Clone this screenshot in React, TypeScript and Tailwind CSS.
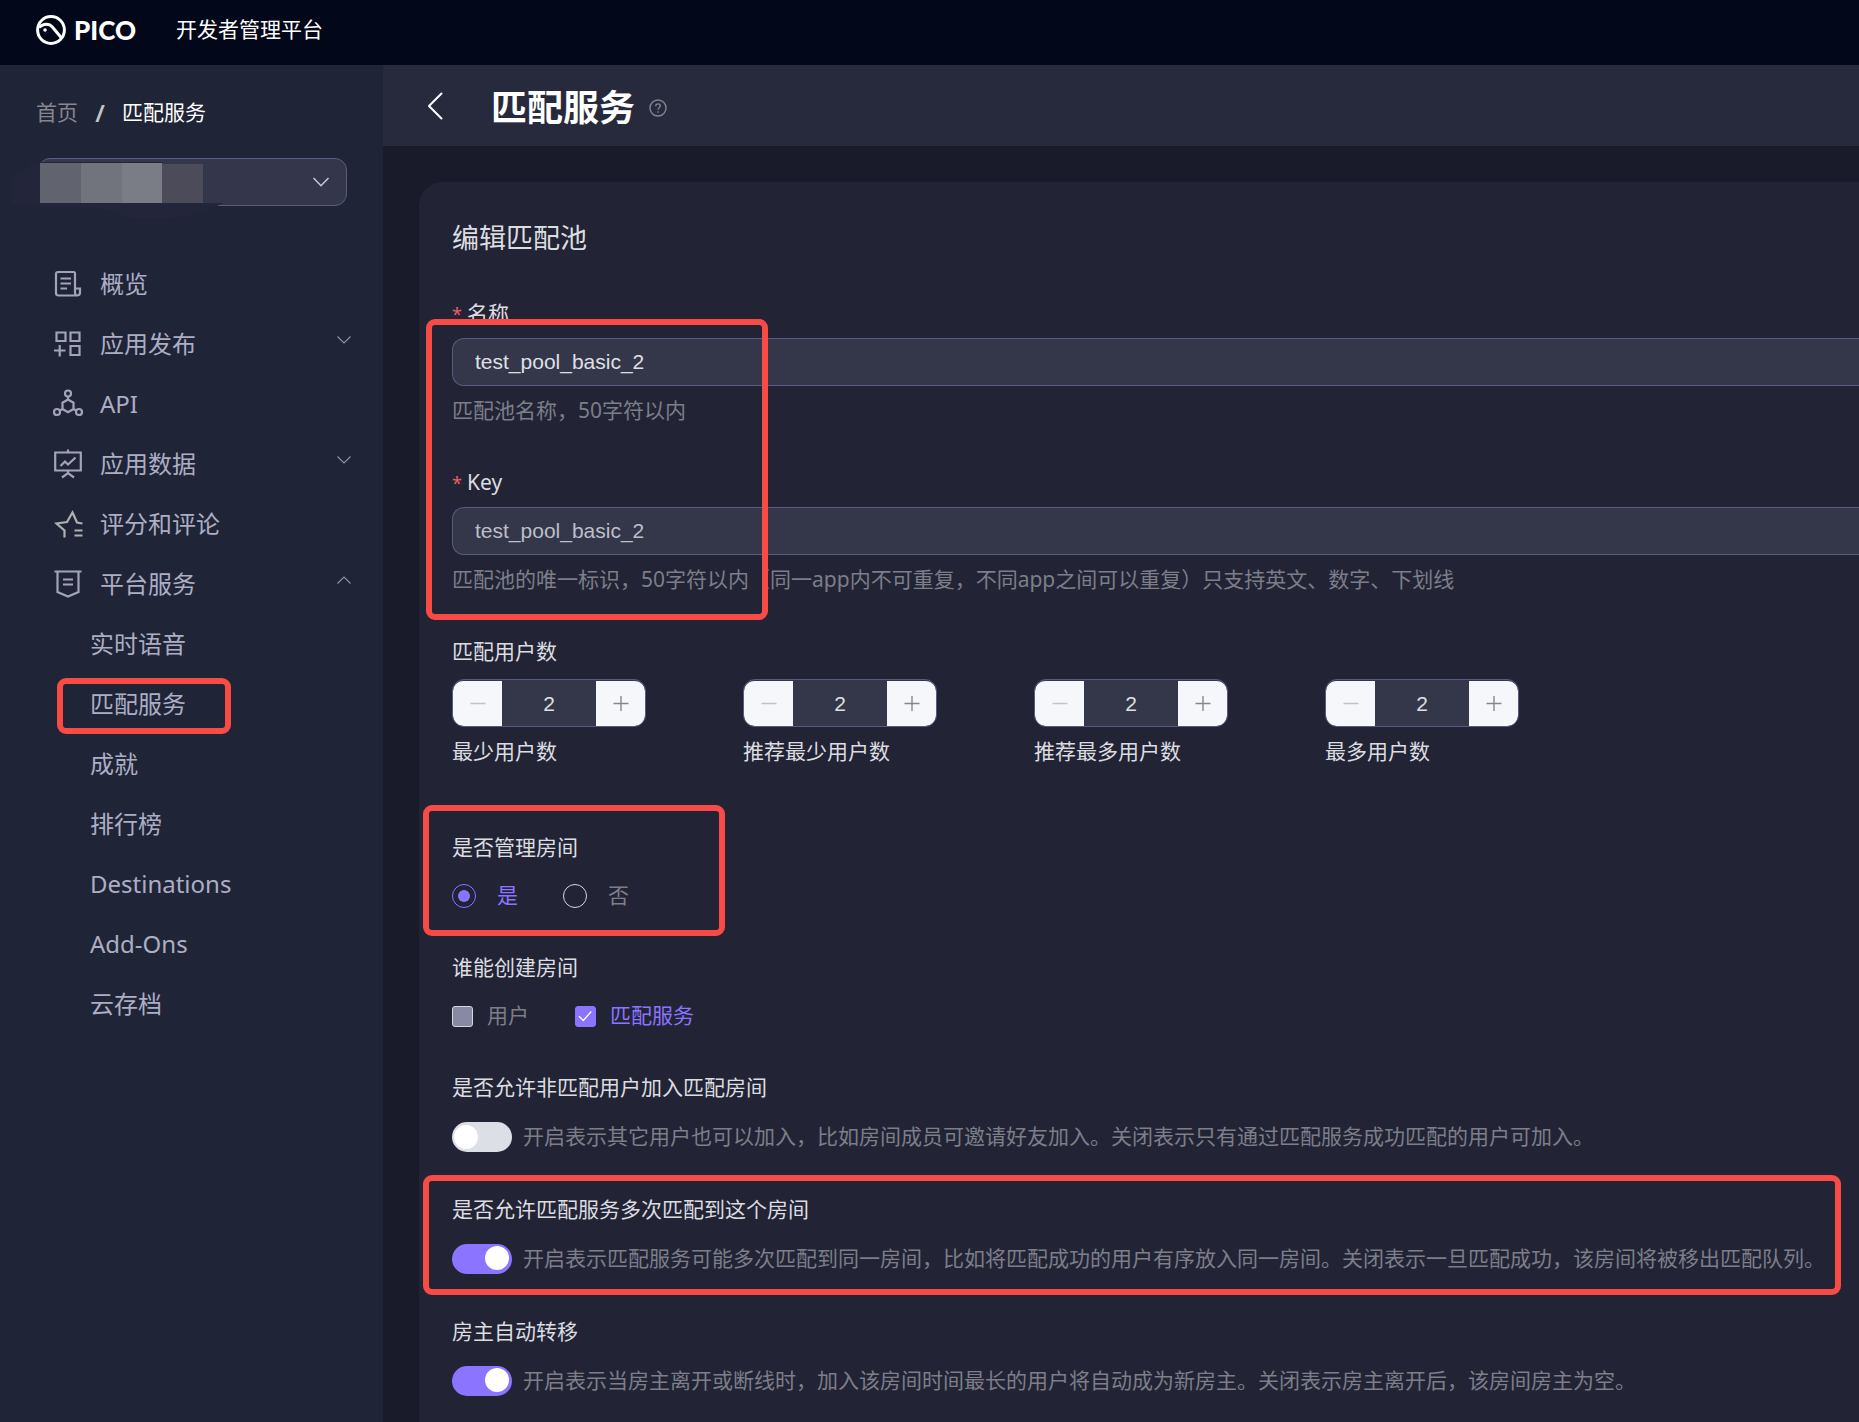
import React, { useState } from "react";

const HIGHLIGHT = "pointer-events-none absolute rounded-[9px] border-6 border-[#f94b46]";

function Logo() {
  return (
    <svg className="size-[30px] shrink-0" viewBox="0 0 30 30" fill="none" stroke="#fff" aria-hidden="true">
      <circle cx="15" cy="15" r="13.4" strokeWidth="3" />
      <path d="M3 12.5C7.5 8.2 13.2 8.3 16.6 12.2L25.5 23" strokeWidth="3" />
      <circle cx="9" cy="15" r="1.8" fill="#fff" stroke="none" />
    </svg>
  );
}

function MenuIcon({ name }: { name: string }) {
  return (
    <svg
      className="size-[30px] shrink-0"
      viewBox="0 0 30 30"
      fill="none"
      stroke={name === "rating" ? "#b0b0b0" : "#a3a4bb"}
      strokeWidth="2.200"
      aria-hidden="true"
    >
      {name === "overview" && (
        <>
          <path d="M22 19.500V4.500Q22 3 20.500 3H5Q3 3 3 5V24Q3 26.500 5.500 26.500H24Q27 26.500 27 23.500V19.500H22V23.500Q22 26.500 24 26.500" />
          <path d="M7.500 9.500H18M7.500 14.500H18M7.500 19.500H14" />
        </>
      )}
      {name === "publish" && (
        <>
          <path d="M3.500 3.500H12.500V12H3.500ZM17.500 3.500H26.500V12H17.500ZM17.500 17H26.500V26H17.500Z" />
          <path d="M1 21.500H12.500M6.700 16V27.500" />
        </>
      )}
      {name === "api" && (
        <>
          <circle cx="15" cy="4.500" r="3" />
          <circle cx="4" cy="23" r="3" />
          <circle cx="26" cy="23" r="3" />
          <path d="M15 7.500V10.500M15 10.500L20.500 13.700V20L15 23.200L9.500 20V13.700ZM9.500 20L6.500 21.700M20.500 20L23.500 21.700" />
        </>
      )}
      {name === "data" && (
        <>
          <path d="M1.200 3.500H28.800M2.200 3.500V21.500H27.800V3.500M15 0.500V3.500" />
          <path d="M7.500 17L12 12.500L15 15.500L22.500 8.500M15 21.500V24M9 28.500L15 24L21 28.500" />
        </>
      )}
      {name === "rating" && (
        <>
          <path d="M11.500 28.500V21.500L3.500 14.500L14 13L19.500 3.500L24 13.500L29.500 14.500" />
          <path d="M21.500 21.500H29.500M21.500 26.500H29.500" />
        </>
      )}
      {name === "platform" && (
        <>
          <path d="M1.500 2.500H28.500M4.500 2.500V23L15 27.500L25.500 23V2.500" />
          <path d="M10 10.500H20M10 15.500H20" />
        </>
      )}
    </svg>
  );
}

const MENU = [
  { icon: "overview", label: "概览" },
  { icon: "publish", label: "应用发布", arrow: "down" },
  { icon: "api", label: "API" },
  { icon: "data", label: "应用数据", arrow: "down" },
  { icon: "rating", label: "评分和评论" },
  { icon: "platform", label: "平台服务", arrow: "up" },
];

const SUBMENU = ["实时语音", "匹配服务", "成就", "排行榜", "Destinations", "Add-Ons", "云存档"];

function Sidebar() {
  return (
    <aside className="w-[383px] shrink-0 bg-[#202437]">
      <nav aria-label="breadcrumb" className="flex h-8 items-center pl-9 text-[21px] mt-8">
        <a href="#" className="text-[#85868f]">首页</a>
        <span className="mx-[17px] w-2.5 text-center text-[24px] font-semibold text-[#c3c4ca]">/</span>
        <a href="#" className="text-white">匹配服务</a>
      </nav>

      <div className="relative ml-[38px] mr-9 mt-[29px]">
        <select
          aria-label="应用"
          className="block h-12 w-full appearance-none rounded-xl border border-[#5a5b82] bg-[#34374b]"
        >
          <option></option>
        </select>
        <svg className="pointer-events-none absolute right-[17px] top-[18px] h-3 w-[18px]" viewBox="0 0 18 12" fill="none" stroke="#c6c7cf" strokeWidth="1.600" aria-hidden="true">
          <path d="M1.500 2L9 9.700L16.500 2" />
        </svg>
        <svg className="pointer-events-none absolute -left-[26px] top-0 h-[62px] w-[214px]" viewBox="0 0 214 62" aria-hidden="true">
          <path d="M0 16L18 10V5L28 4H191V45H212L200 50L180 57L160 60H120L82 49H28V46H0Z" fill="#23263a" />
          <path d="M150 1.500H205V44H191V7H150Z" fill="#34374b" />
          <rect x="28" y="5" width="41" height="40" fill="#61646f" />
          <rect x="69" y="5" width="41" height="40" fill="#71747d" />
          <rect x="110" y="5" width="40" height="40" fill="#7a7d86" />
          <rect x="150" y="6" width="41" height="39" fill="#4b4b59" />
        </svg>
      </div>

      <ul className="mt-12 text-[24px] text-[#acaec5]">
        {MENU.map((m) => (
          <li key={m.label}>
            <button type="button" className="flex h-[60px] w-full items-center gap-[17px] pl-[53px] pr-[31px]">
              <MenuIcon name={m.icon} />
              <span>{m.label}</span>
              {m.arrow && (
                <svg className="mb-2 ml-auto h-2.5 w-4" viewBox="0 0 16 10" fill="none" stroke="#8f919f" strokeWidth="1.200" aria-hidden="true">
                  {m.arrow === "down" ? <path d="M1.500 1.500L8 8L14.500 1.500" /> : <path d="M1.500 8.500L8 2L14.500 8.500" />}
                </svg>
              )}
            </button>
          </li>
        ))}
        {SUBMENU.map((label) => (
          <li key={label} className="relative">
            <a href="#" className="flex h-[60px] items-center pl-[90px]">{label}</a>
            {label === "匹配服务" && <span className={`${HIGHLIGHT} left-[57px] top-1 h-14 w-[174px]`} />}
          </li>
        ))}
      </ul>
    </aside>
  );
}

function TextField({ id, label, help, value, dim }: { id: string; label: string; help: string; value: string; dim?: boolean }) {
  return (
    <div>
      <label htmlFor={id} className="flex h-8 items-center gap-[7px]">
        <span className="w-2 text-[18px] text-[#e8605f]">*</span>
        {label}
      </label>
      <input
        id={id}
        type="text"
        defaultValue={value}
        className={`mt-2 block h-12 w-full rounded-l-xl border border-r-0 border-[#5a5b82] bg-[#34364a] px-[22px] font-['Liberation_Sans',sans-serif] ${dim ? "text-[#bcbfc9]" : "text-[#dfe0e4]"}`}
      />
      <p className="mt-2 h-8 whitespace-nowrap leading-8 text-[#7c7e8a]">{help}</p>
    </div>
  );
}

function Stepper({ id, label }: { id: string; label: string }) {
  const [value, setValue] = useState(2);
  return (
    <div className="w-[194px]">
      <div className="flex h-12 overflow-hidden rounded-xl border border-[#5a5b82] bg-[#34364a] pt-px">
        <button type="button" aria-label="减少" onClick={() => setValue(Math.max(2, value - 1))} className="flex w-[49px] shrink-0 items-center justify-center rounded-l-[10px] bg-[#f5f7fb]">
          <svg className="size-4" viewBox="0 0 16 16" stroke="#c0c3cc" strokeWidth="1.400" aria-hidden="true">
            <path d="M0.500 7.500H15.500" />
          </svg>
        </button>
        <input
          id={id}
          type="text"
          value={value}
          onChange={(e) => setValue(Number(e.target.value) || 0)}
          className="w-full min-w-0 bg-transparent text-center font-['Liberation_Sans',sans-serif] text-[#dfe0e4]"
        />
        <button type="button" aria-label="增加" onClick={() => setValue(value + 1)} className="flex w-[49px] shrink-0 items-center justify-center rounded-r-[10px] bg-[#f5f7fb]">
          <svg className="size-4" viewBox="0 0 16 16" stroke="#85878f" strokeWidth="1.400" aria-hidden="true">
            <path d="M0.500 7.500H15.500M8 0V15" />
          </svg>
        </button>
      </div>
      <label htmlFor={id} className="mt-2 block h-8 whitespace-nowrap leading-8">{label}</label>
    </div>
  );
}

function Radio({ label, checked }: { label: string; checked?: boolean }) {
  return (
    <label className="flex items-center gap-[21px] text-[#7c7e8a] has-checked:text-[#8b74ff]">
      <input
        type="radio"
        name="manage-room"
        defaultChecked={checked}
        className="size-6 appearance-none rounded-full border border-[#d6d7dc] p-[5px] checked:border-[#8b74ff] checked:bg-[#8b74ff] checked:bg-clip-content"
      />
      {label}
    </label>
  );
}

function CheckBox({ label, checked }: { label: string; checked?: boolean }) {
  return (
    <label className="flex items-center gap-3.5 text-[#7c7e8a] has-checked:text-[#8b74ff]">
      <span className="relative flex">
        <input
          type="checkbox"
          defaultChecked={checked}
          className="peer size-[21px] appearance-none rounded-[3px] border border-[#d6d7dc] bg-[#888aa4] checked:border-[#8b74ff] checked:bg-[#8b74ff]"
        />
        <svg className="pointer-events-none absolute inset-0 hidden size-[21px] peer-checked:block" viewBox="0 0 21 21" fill="none" stroke="#fff" strokeWidth="1.300" aria-hidden="true">
          <path d="M4 10.300L8.300 14.500L16.300 5.500" />
        </svg>
      </span>
      {label}
    </label>
  );
}

function SwitchField({ id, label, help, checked, highlight }: { id: string; label: string; help: string; checked?: boolean; highlight?: boolean }) {
  return (
    <div className="relative">
      <label htmlFor={id} className="block h-8 leading-8">{label}</label>
      <div className="mt-[18px] flex h-8 items-center gap-[11px]">
        <span className="relative flex shrink-0">
          <input
            id={id}
            type="checkbox"
            role="switch"
            defaultChecked={checked}
            className="peer h-[30px] w-[60px] appearance-none rounded-full bg-[#dcdfe6] checked:bg-[#8b74ff]"
          />
          <span className="pointer-events-none absolute left-0.5 top-[3px] size-6 rounded-full bg-white peer-checked:left-auto peer-checked:right-[3px] peer-checked:top-0.5" />
        </span>
        <span className="whitespace-nowrap text-[#7c7e8a]">{help}</span>
      </div>
      {highlight && <span className={`${HIGHLIGHT} -left-[29px] -top-[18px] right-[18px] h-[120px]`} />}
    </div>
  );
}

export default function App() {
  return (
    <div className="flex min-h-screen flex-col overflow-hidden bg-[#191b2b] font-['Noto_Sans','Noto_Sans_CJK_SC',sans-serif]">
      <header className="flex h-[65px] items-center bg-[#020719] pb-[5px] pl-9 text-white">
        <Logo />
        <span className="ml-2 w-[66px] font-['Lato',sans-serif] text-[26px] font-black leading-none">PICO</span>
        <span className="ml-9 text-[21px]">开发者管理平台</span>
      </header>

      <div className="flex flex-1">
        <Sidebar />
        <main className="flex min-w-0 flex-1 flex-col">
          <div className="flex h-[81px] items-center bg-[#272a3c] pl-11">
            <button type="button" aria-label="返回" className="flex">
              <svg className="h-7 w-4" viewBox="0 0 16 28" fill="none" stroke="#fff" strokeWidth="2" strokeLinecap="round" strokeLinejoin="round" aria-hidden="true">
                <path d="M14.500 1.500L2 14L14.500 26.500" />
              </svg>
            </button>
            <div className="ml-12 flex items-center gap-3.5 pt-1">
              <h1 className="text-[36px] font-bold leading-10 text-white">匹配服务</h1>
              <svg className="size-[18px]" viewBox="0 0 18 18" fill="none" stroke="#83848f" strokeWidth="1.400" aria-hidden="true">
                <circle cx="9" cy="9" r="8" />
                <path d="M6.700 7.200C6.700 4 11.400 4.200 11.300 7C11.200 8.700 9 8.800 9 10.800M9 12.200V13.800" />
              </svg>
            </div>
          </div>

          <form className="ml-9 mt-9 flex-1 rounded-tl-3xl bg-[#222435] pb-5 pl-[33px] text-[21px] text-[#dcdde0]">
            <h2 className="mt-9 h-10 text-[27px] leading-10">编辑匹配池</h2>

            <div className="relative mt-10 flex flex-col gap-[41px]">
              <TextField id="pool-name" label="名称" value="test_pool_basic_2" help="匹配池名称，50字符以内" />
              <TextField id="pool-key" label="Key" value="test_pool_basic_2" dim help="匹配池的唯一标识，50字符以内（同一app内不可重复，不同app之间可以重复）只支持英文、数字、下划线" />
              <span className={`${HIGHLIGHT} -left-[26px] top-[21px] h-[301px] w-[342px]`} />
            </div>

            <fieldset className="mt-10">
              <legend className="h-8 leading-8">匹配用户数</legend>
              <div className="mt-3 flex gap-[97px]">
                <Stepper id="min-users" label="最少用户数" />
                <Stepper id="rec-min-users" label="推荐最少用户数" />
                <Stepper id="rec-max-users" label="推荐最多用户数" />
                <Stepper id="max-users" label="最多用户数" />
              </div>
            </fieldset>

            <div className="relative mt-16">
              <fieldset>
                <legend className="h-8 leading-8">是否管理房间</legend>
                <div className="mt-[17px] flex h-8 items-center gap-[45px]">
                  <Radio label="是" checked />
                  <Radio label="否" />
                </div>
              </fieldset>
              <span className={`${HIGHLIGHT} -left-[29px] -top-[26px] h-[131px] w-[302px]`} />
            </div>

            <fieldset className="mt-[39px]">
              <legend className="h-8 leading-8">谁能创建房间</legend>
              <div className="mt-[17px] flex h-8 items-center gap-[46px]">
                <CheckBox label="用户" />
                <CheckBox label="匹配服务" checked />
              </div>
            </fieldset>

            <div className="mt-[39px] flex flex-col gap-10">
              <SwitchField id="allow-others" label="是否允许非匹配用户加入匹配房间" help="开启表示其它用户也可以加入，比如房间成员可邀请好友加入。关闭表示只有通过匹配服务成功匹配的用户可加入。" />
              <SwitchField id="allow-rematch" label="是否允许匹配服务多次匹配到这个房间" checked highlight help="开启表示匹配服务可能多次匹配到同一房间，比如将匹配成功的用户有序放入同一房间。关闭表示一旦匹配成功，该房间将被移出匹配队列。" />
              <SwitchField id="auto-transfer" label="房主自动转移" checked help="开启表示当房主离开或断线时，加入该房间时间最长的用户将自动成为新房主。关闭表示房主离开后，该房间房主为空。" />
            </div>
          </form>
        </main>
      </div>
    </div>
  );
}
